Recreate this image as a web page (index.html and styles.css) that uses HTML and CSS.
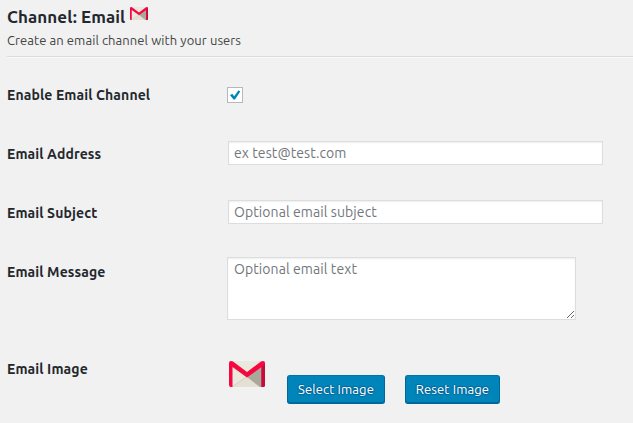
FILE: index.html
```html
<!DOCTYPE html>
<html lang="en">
<head>
<meta charset="utf-8">
<title>Channel: Email</title>
<link rel="stylesheet" href="styles.css">
</head>
<body>
<svg class="defs" width="0" height="0" aria-hidden="true">
  <symbol id="mail" viewBox="0 0 36 26" preserveAspectRatio="none">
    <rect width="36" height="26" rx="1.5" fill="#eae7dc"/>
    <path d="M3 26 18 15 33 26z" fill="#e4e1d4"/>
    <path d="M18 16 33 4V26H31z" fill="#aaa79b"/>
    <path d="M3 26 18 15.500" stroke="#c8c5b8" stroke-width=".6"/>
    <path d="M3 0H33L18 11z" fill="#eae9df"/>
    <path d="M0 2Q0 0 2 0L4 .5 18 11 32 .5 34 0Q36 0 36 2V24Q36 26 34 26H32.500V6L18 16.500 3.500 6V26H2Q0 26 0 24z" fill="#f7073f"/>
    <path d="M32.500 6 36 3V24Q36 26 34 26H32.500z" fill="#c60b3c"/>
  </symbol>
</svg>
<header class="header">
  <h1 class="title"><span class="title-text">Channel: Email</span><svg class="title-icon"><use href="#mail"/></svg></h1>
  <p class="description">Create an email channel with your users</p>
</header>
<form class="form">
  <div class="row">
    <label class="label" for="enable">Enable Email Channel</label>
    <span class="check"><input class="check-input" id="enable" type="checkbox" checked><svg class="tick" viewBox="0 0 16 16"><path d="M3 8.200 5.200 6.800 7.200 9.300 11.500 3.200 13.300 4.500 8 12.500H6.500z" fill="#0085ba"/></svg></span>
  </div>
  <div class="row">
    <label class="label" for="address">Email Address</label>
    <input class="field" id="address" type="text" placeholder="ex test@test.com">
  </div>
  <div class="row">
    <label class="label" for="subject">Email Subject</label>
    <input class="field" id="subject" type="text" placeholder="Optional email subject">
  </div>
  <div class="row row-message">
    <label class="label" for="message">Email Message</label>
    <textarea class="message" id="message" placeholder="Optional email text"></textarea>
  </div>
  <div class="row">
    <span class="label">Email Image</span>
    <div class="image-controls">
      <svg class="preview"><use href="#mail"/></svg>
      <button class="button button-select" type="button">Select Image</button>
      <button class="button button-reset" type="button">Reset Image</button>
    </div>
  </div>
</form>
</body>
</html>
```
FILE: styles.css
```css
* { box-sizing: border-box; }
body {
  margin: 0;
  height: 423px;
  overflow: hidden;
  background: #f1f1f1;
  color: #23282d;
  font-family: Ubuntu, "Noto Sans", sans-serif;
}
.defs { display: block; }
.header {
  margin-left: 7px;
  height: 57px;
  padding-top: 5px;
  border-bottom: 1px solid #dcdcdc;
  box-shadow: 0 1px 0 #fafafa;
}
.title {
  display: flex;
  margin: 0;
  height: 24px;
  font-size: 17px;
  line-height: 24px;
  font-weight: 700;
  letter-spacing: .08px;
}
.title-text { width: 123px; white-space: nowrap; }
.title-icon { width: 18px; height: 13px; margin-top: 2px; }
.description {
  margin: 2px 0 0;
  font-size: 13px;
  line-height: 19px;
  letter-spacing: .08px;
  color: #444;
}
.form { padding: 9px 0 0 7px; }
.row {
  display: grid;
  grid-template-columns: 220px 1fr;
  align-items: start;
  height: 59px;
}
.row-message { height: 97px; }
.label {
  margin-top: 20px;
  font-size: 14px;
  line-height: 18px;
  font-weight: 700;
  letter-spacing: .11px;
}
.check { display: grid; width: 16px; height: 16px; margin-top: 21px; }
.check-input, .tick { grid-area: 1 / 1; width: 16px; height: 16px; margin: 0; }
.check-input { appearance: none; border: 1px solid #b4b9be; background: #fff; }
.tick { pointer-events: none; }
.field, .message {
  border: 1px solid #ddd;
  border-radius: 0;
  background: #fff;
  box-shadow: inset 0 1px 2px rgba(0, 0, 0, .07);
  color: #32373c;
  font-family: inherit;
  font-size: 14px;
  letter-spacing: .09px;
  outline: 0;
}
.field {
  width: 375px;
  height: 24px;
  margin: 16px 0 0 1px;
  padding: 0 5px 1px;
}
.message {
  width: 349px;
  height: 63px;
  margin: 14px 0 0;
  padding: 2px 6px;
  line-height: 19px;
  resize: both;
}
::placeholder { color: #72777c; opacity: 1; }
.image-controls { display: flex; align-items: flex-start; }
.preview { width: 36px; height: 26px; margin: 21px 22px 0 2px; }
.button {
  height: 29px;
  margin: 35px 0 0;
  padding: 0 0 1px;
  border: 1px solid #006799;
  border-top-color: #0073aa;
  border-radius: 3px;
  background: #0085ba;
  box-shadow: inset 0 -1px 0 #006799;
  color: #fff;
  font: 13px/26px Ubuntu, "Noto Sans", sans-serif;
  letter-spacing: .12px;
  text-shadow: 0 -1px 1px #006799, 1px 0 1px #006799, 0 1px 1px #006799, -1px 0 1px #006799;
  white-space: nowrap;
}
.button-select { width: 98px; }
.button-reset { width: 95px; margin-left: 20px; }
```
